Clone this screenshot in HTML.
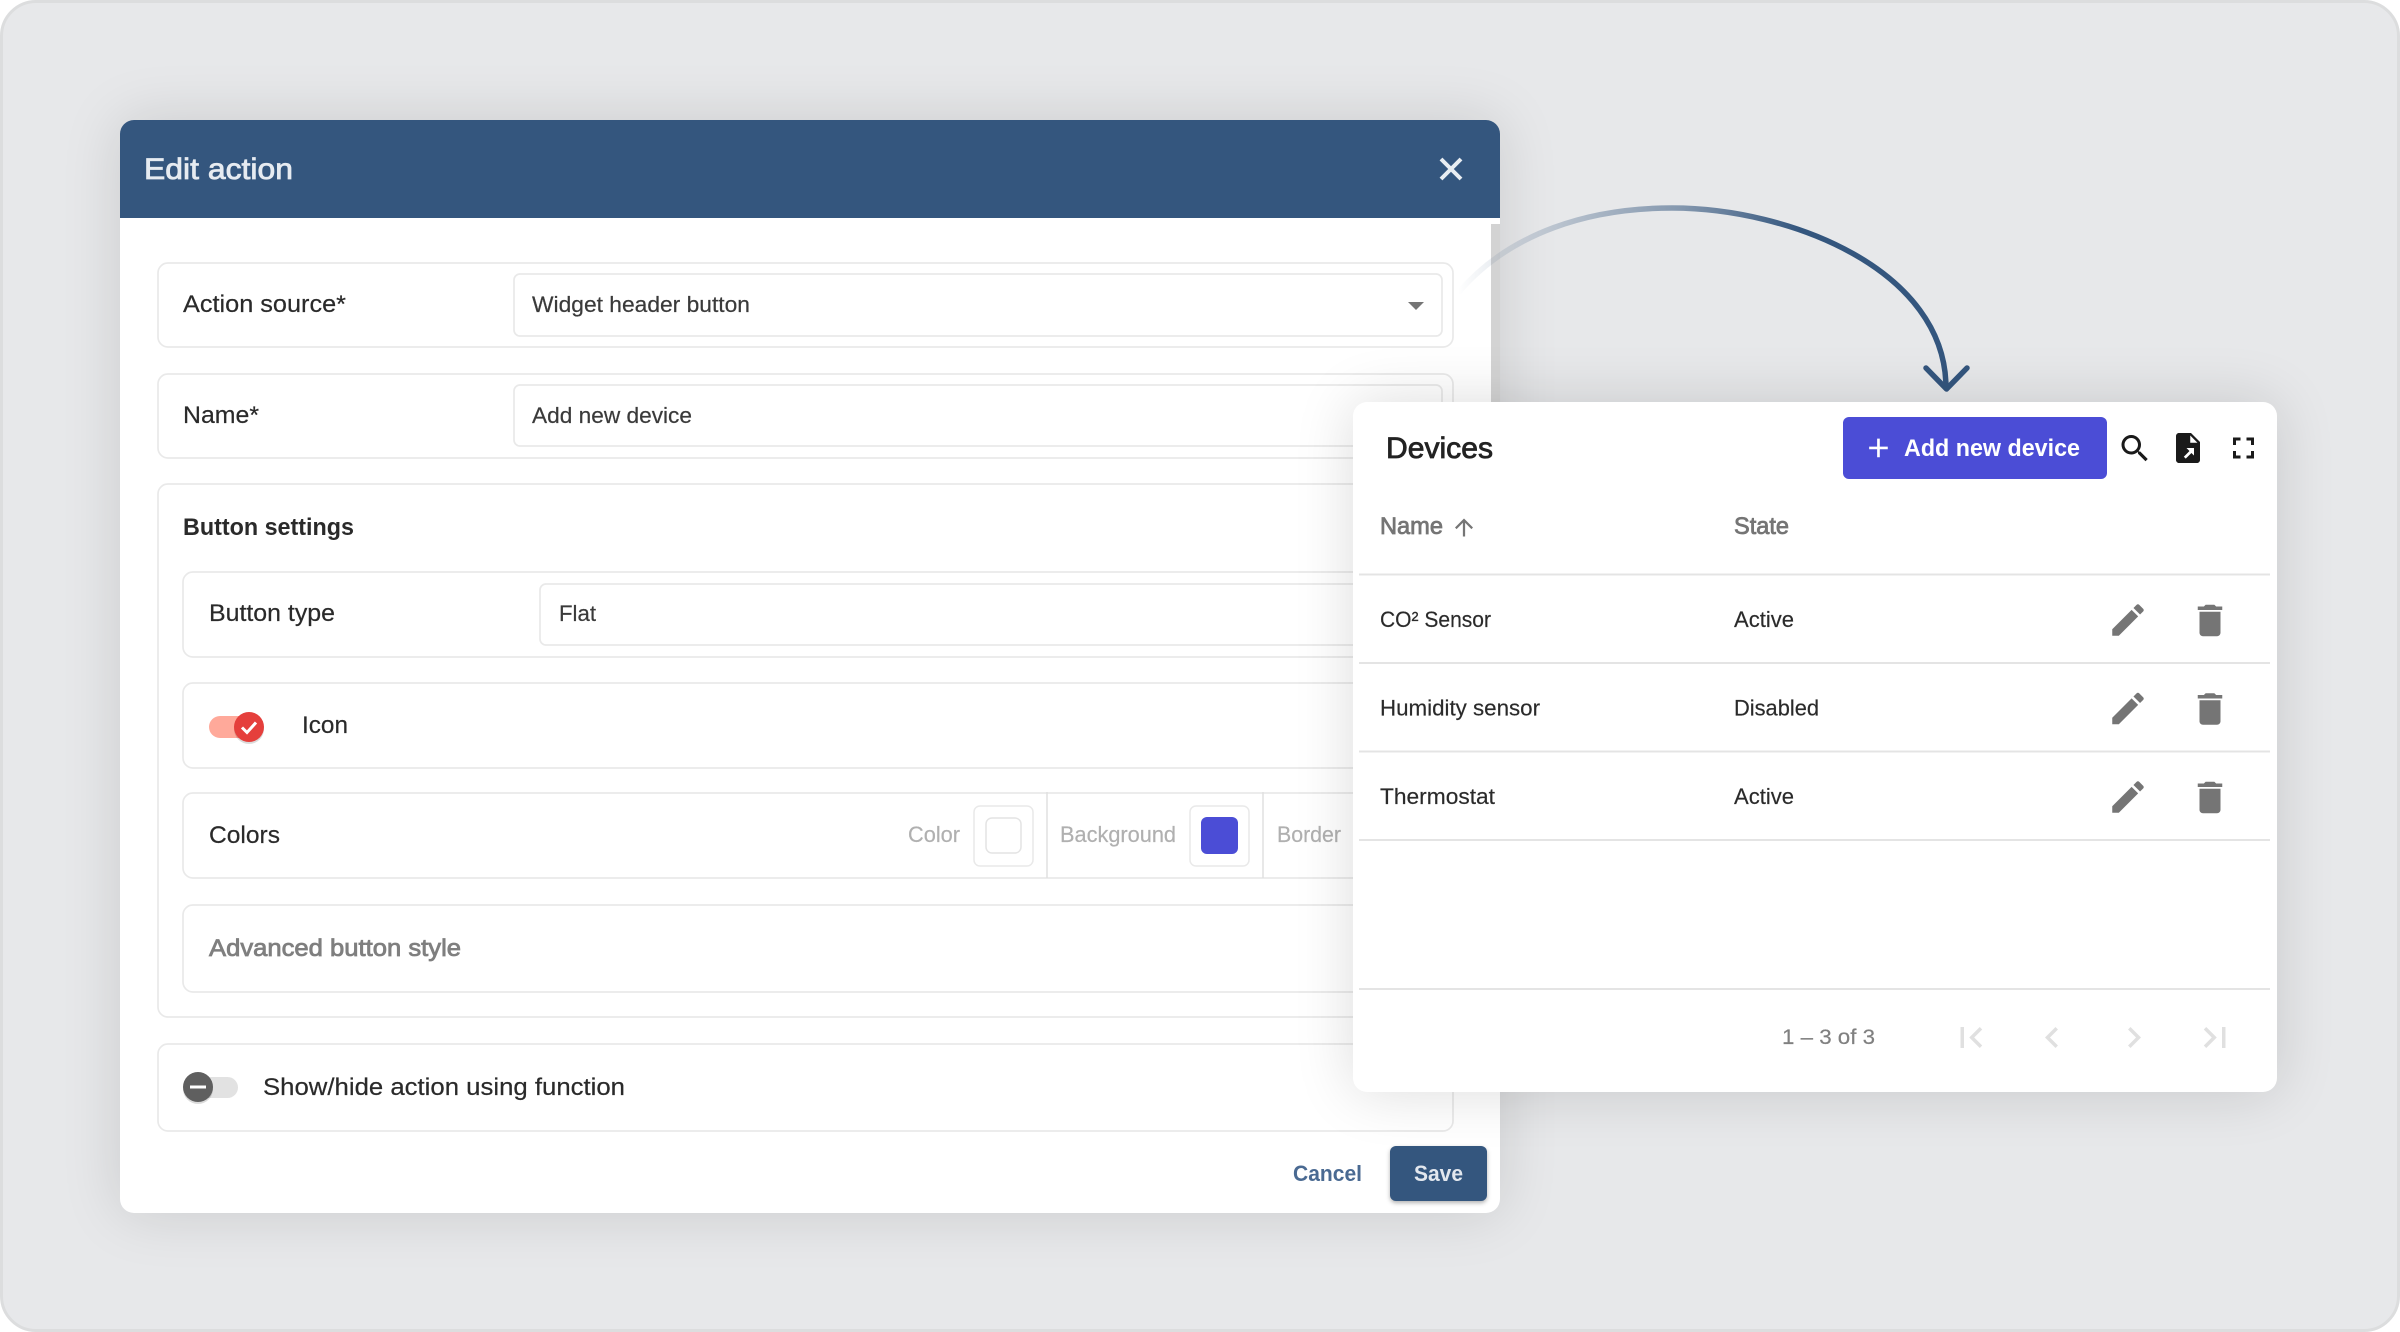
<!DOCTYPE html>
<html lang="en"><head><meta charset="utf-8"><title>Edit action</title>
<style>
html,body{margin:0;padding:0;width:2400px;height:1332px;overflow:hidden;background:#fff}
#frame{position:absolute;left:0;top:0;width:2400px;height:1332px;box-sizing:border-box;border:3px solid #dcddde;border-radius:36px;background:#e7e8ea;overflow:hidden}
#dialog{position:absolute;left:120px;top:120px;width:1380px;height:1093px;background:#fff;border-radius:14px;box-shadow:0 0 60px rgba(0,0,0,.13)}
#card{position:absolute;left:1353px;top:402px;width:924px;height:690px;background:#fff;border-radius:14px;box-shadow:0 0 60px rgba(0,0,0,.14)}
svg.l{position:absolute;left:0;top:0;width:2400px;height:1332px}
svg text{font-family:"Liberation Sans",sans-serif;white-space:pre}
.box{fill:#fff;stroke:#e9e9e9;stroke-width:1.7}
.t{font-size:24.5px;fill:#2a2a2a;stroke:#2a2a2a;stroke-width:.2px}
.f{font-size:22px;fill:#3a3a3a;stroke:#3a3a3a;stroke-width:.2px}
.g{font-size:22px;fill:#b0b0b0;stroke:#b0b0b0;stroke-width:.2px}
.m{stroke-width:.8px}
</style></head><body>
<div id="frame"></div>
<div id="dialog"></div>

<svg class="l" viewBox="0 0 2400 1332">
  <path d="M120 218V134a14 14 0 0 1 14-14H1486a14 14 0 0 1 14 14V218z" fill="#34567e"/>
  <rect x="1491" y="224" width="9" height="180" fill="#d3d3d3"/>
  <text x="144" y="179" font-size="30" fill="#e6ebf1" stroke="#e6ebf1" class="m" textLength="149" lengthAdjust="spacingAndGlyphs">Edit action</text>
  <path d="M1441 159l20 20M1461 159l-20 20" stroke="#e8edf2" stroke-width="4" fill="none"/>

  <rect class="box" x="158" y="263" width="1295" height="84" rx="10"/>
  <rect class="box" x="514" y="274" width="928" height="62" rx="6"/>
  <text class="t" x="183" y="312" textLength="163" lengthAdjust="spacingAndGlyphs">Action source*</text>
  <text class="f" x="532" y="312" textLength="218" lengthAdjust="spacingAndGlyphs">Widget header button</text>
  <path d="M1408 302h16l-8 8z" fill="#757575"/>

  <rect class="box" x="158" y="374" width="1295" height="84" rx="10"/>
  <rect class="box" x="514" y="385" width="928" height="61" rx="6"/>
  <text class="t" x="183" y="423" textLength="76" lengthAdjust="spacingAndGlyphs">Name*</text>
  <text class="f" x="532" y="423" textLength="160" lengthAdjust="spacingAndGlyphs">Add new device</text>

  <rect class="box" x="158" y="484" width="1295" height="533" rx="10"/>
  <text x="183" y="535" font-size="24" font-weight="700" fill="#2a2a2a" textLength="171" lengthAdjust="spacingAndGlyphs">Button settings</text>

  <rect class="box" x="183" y="572" width="1250" height="85" rx="10"/>
  <rect class="box" x="540" y="584" width="880" height="61" rx="6"/>
  <text class="t" x="209" y="621" textLength="126" lengthAdjust="spacingAndGlyphs">Button type</text>
  <text class="f" x="559" y="621" textLength="37" lengthAdjust="spacingAndGlyphs">Flat</text>

  <rect class="box" x="183" y="683" width="1250" height="85" rx="10"/>
  <rect x="209" y="716" width="46" height="22" rx="11" fill="#ffa99a"/>
  <circle cx="249" cy="729" r="15" fill="#000" opacity=".14"/>
  <circle cx="249" cy="727" r="15" fill="#e53f3c"/>
  <path d="M242 727.5l5 5 9-10" stroke="#fff" stroke-width="3" fill="none"/>
  <text class="t" x="302" y="733" textLength="46" lengthAdjust="spacingAndGlyphs">Icon</text>

  <rect class="box" x="183" y="793" width="1250" height="85" rx="10"/>
  <text class="t" x="209" y="843" textLength="71" lengthAdjust="spacingAndGlyphs">Colors</text>
  <text class="g" x="908" y="842" textLength="52" lengthAdjust="spacingAndGlyphs">Color</text>
  <rect x="974" y="806" width="59" height="60" rx="6" fill="#fff" stroke="#e9e9e9" stroke-width="1.5"/>
  <rect x="986" y="818" width="35" height="35" rx="6" fill="#fff" stroke="#e4e4e4" stroke-width="1.5"/>
  <path d="M1047 792v86M1263 792v86" stroke="#e0e0e0" stroke-width="1.5"/>
  <text class="g" x="1060" y="842" textLength="116" lengthAdjust="spacingAndGlyphs">Background</text>
  <rect x="1190" y="806" width="59" height="60" rx="6" fill="#fff" stroke="#e9e9e9" stroke-width="1.5"/>
  <rect x="1201" y="817" width="37" height="37" rx="6" fill="#4b4dd6"/>
  <text class="g" x="1277" y="842" textLength="64" lengthAdjust="spacingAndGlyphs">Border</text>

  <rect class="box" x="183" y="905" width="1250" height="87" rx="10"/>
  <text x="209" y="956" font-size="24.5" fill="#7f7f7f" stroke="#7f7f7f" class="m" textLength="252" lengthAdjust="spacingAndGlyphs">Advanced button style</text>

  <rect class="box" x="158" y="1044" width="1295" height="87" rx="10"/>
  <rect x="190" y="1077" width="48" height="21" rx="10.5" fill="#e2e2e2"/>
  <circle cx="198" cy="1089" r="15" fill="#000" opacity=".14"/>
  <circle cx="198" cy="1087" r="15" fill="#5f5f5f"/>
  <path d="M190 1087h16" stroke="#fff" stroke-width="3"/>
  <text class="t" x="263" y="1095" textLength="362" lengthAdjust="spacingAndGlyphs">Show/hide action using function</text>

  <text x="1293" y="1181" font-size="22" font-weight="700" fill="#4a6a92" textLength="69" lengthAdjust="spacingAndGlyphs">Cancel</text>
  <rect x="1390" y="1146" width="97" height="55" rx="6" fill="#34567e" style="filter:drop-shadow(0 2px 2px rgba(0,0,0,.3))"/>
  <text x="1414" y="1181" font-size="22" font-weight="700" fill="#e2e7ee" textLength="49" lengthAdjust="spacingAndGlyphs">Save</text>
</svg>

<svg class="l" viewBox="0 0 2400 1332">
  <defs><linearGradient id="ar" gradientUnits="userSpaceOnUse" x1="1458" y1="0" x2="1800" y2="0">
    <stop offset="0" stop-color="#34567e" stop-opacity="0"/>
    <stop offset=".1" stop-color="#34567e" stop-opacity=".1"/>
    <stop offset=".65" stop-color="#34567e" stop-opacity=".55"/>
    <stop offset="1" stop-color="#34567e"/>
  </linearGradient></defs>
  <path d="M1458 293C1510 232 1590 208 1672 208C1790 208 1946 270 1946 388" fill="none" stroke="url(#ar)" stroke-width="5.5"/>
  <path d="M1926 368l20.500 21 20.500-21" fill="none" stroke="#34567e" stroke-width="5.5" stroke-linecap="round" stroke-linejoin="round"/>
</svg>

<div id="card"></div>

<svg class="l" viewBox="0 0 2400 1332">
  <text x="1386" y="458" font-size="30" fill="#222" stroke="#222" class="m" textLength="107" lengthAdjust="spacingAndGlyphs">Devices</text>
  <rect x="1843" y="417" width="264" height="62" rx="6" fill="#4b4dd6"/>
  <path transform="translate(1862.500,432) scale(1.33)" fill="#fff" d="M19 13h-6v6h-2v-6H5v-2h6V5h2v6h6v2z"/>
  <text x="1904" y="456" font-size="24" font-weight="700" fill="#fff" textLength="176" lengthAdjust="spacingAndGlyphs">Add new device</text>
  <path transform="translate(2117,430.500) scale(1.5)" fill="#1a1a1a" d="M15.500 14h-.79l-.28-.27A6.471 6.471 0 0 0 16 9.500 6.500 6.500 0 1 0 9.500 16c1.610 0 3.090-.59 4.230-1.570l.27.28v.79l5 4.990L20.490 19l-4.990-5zm-6 0C7.010 14 5 11.990 5 9.500S7.010 5 9.500 5 14 7.010 14 9.500 11.990 14 9.500 14z"/>
  <g transform="translate(2170,430) scale(1.5)">
    <path fill="#1a1a1a" d="M6 2c-1.100 0-2 .9-2 2v16c0 1.100.9 2 2 2h12c1.100 0 2-.9 2-2V8l-6-6H6z"/>
    <path fill="#fff" d="M13.500 3.700L18.300 8.500h-4.800z"/>
    <path fill="#fff" d="M11 12h5v5l-1.700-1.700-3.800 3.800-1.300-1.300 3.800-3.800z"/>
  </g>
  <path transform="translate(2225.500,430) scale(1.5)" fill="#1a1a1a" d="M7 14H5v5h5v-2H7v-3zm-2-4h2V7h3V5H5v5zm12 7h-3v2h5v-5h-2v3zM14 5v2h3v3h2V5h-5z"/>

  <text x="1380" y="534" font-size="24" fill="#757575" stroke="#757575" class="m" textLength="63" lengthAdjust="spacingAndGlyphs">Name</text>
  <path transform="translate(1450.500,514) scale(1.125)" fill="#757575" d="M4 12l1.410 1.410L11 7.830V20h2V7.830l5.580 5.590L20 12l-8-8-8 8z"/>
  <text x="1734" y="534" font-size="24" fill="#757575" stroke="#757575" class="m" textLength="55" lengthAdjust="spacingAndGlyphs">State</text>

  <path d="M1359 574.500H2270M1359 663H2270M1359 751.500H2270M1359 840H2270M1359 989H2270" stroke="#e4e4e4" stroke-width="2"/>

  <text class="f" x="1380" y="627" textLength="111" lengthAdjust="spacingAndGlyphs" style="fill:#2a2a2a">CO² Sensor</text>
  <text class="f" x="1734" y="627" textLength="60" lengthAdjust="spacingAndGlyphs" style="fill:#2a2a2a">Active</text>
  <text class="f" x="1380" y="715.500" textLength="160" lengthAdjust="spacingAndGlyphs" style="fill:#2a2a2a">Humidity sensor</text>
  <text class="f" x="1734" y="715.500" textLength="85" lengthAdjust="spacingAndGlyphs" style="fill:#2a2a2a">Disabled</text>
  <text class="f" x="1380" y="804" textLength="115" lengthAdjust="spacingAndGlyphs" style="fill:#2a2a2a">Thermostat</text>
  <text class="f" x="1734" y="804" textLength="60" lengthAdjust="spacingAndGlyphs" style="fill:#2a2a2a">Active</text>

  <g fill="#757575">
    <path transform="translate(2107,599) scale(1.75)" d="M3 17.250V21h3.750L17.810 9.940l-3.750-3.750L3 17.250zM20.710 7.040c.39-.39.39-1.020 0-1.410l-2.340-2.340c-.39-.39-1.020-.39-1.410 0l-1.830 1.830 3.750 3.750 1.830-1.830z"/>
    <path transform="translate(2189,599.500) scale(1.75)" d="M6 19c0 1.100.9 2 2 2h8c1.100 0 2-.9 2-2V7H6v12zM19 4h-3.500l-1-1h-5l-1 1H5v2h14V4z"/>
    <path transform="translate(2107,687.500) scale(1.75)" d="M3 17.250V21h3.750L17.810 9.940l-3.750-3.750L3 17.250zM20.710 7.040c.39-.39.39-1.020 0-1.410l-2.340-2.340c-.39-.39-1.020-.39-1.410 0l-1.830 1.830 3.750 3.750 1.830-1.830z"/>
    <path transform="translate(2189,688) scale(1.75)" d="M6 19c0 1.100.9 2 2 2h8c1.100 0 2-.9 2-2V7H6v12zM19 4h-3.500l-1-1h-5l-1 1H5v2h14V4z"/>
    <path transform="translate(2107,776) scale(1.75)" d="M3 17.250V21h3.750L17.810 9.940l-3.750-3.750L3 17.250zM20.710 7.040c.39-.39.39-1.020 0-1.410l-2.340-2.340c-.39-.39-1.020-.39-1.410 0l-1.830 1.830 3.750 3.750 1.830-1.830z"/>
    <path transform="translate(2189,776.500) scale(1.75)" d="M6 19c0 1.100.9 2 2 2h8c1.100 0 2-.9 2-2V7H6v12zM19 4h-3.500l-1-1h-5l-1 1H5v2h14V4z"/>
  </g>

  <text x="1782" y="1044" font-size="21" fill="#808080" stroke="#808080" stroke-width=".2" textLength="93" lengthAdjust="spacingAndGlyphs">1 – 3 of 3</text>
  <g fill="#e0e0e0">
    <path transform="translate(1950,1016.500) scale(1.75)" d="M18.410 16.590L13.820 12l4.590-4.590L17 6l-6 6 6 6zM6 6h2v12H6z"/>
    <path transform="translate(2031,1016.500) scale(1.75)" d="M15.410 7.410L14 6l-6 6 6 6 1.410-1.410L10.830 12z"/>
    <path transform="translate(2113,1016.500) scale(1.75)" d="M10 6L8.590 7.410 13.170 12l-4.580 4.590L10 18l6-6z"/>
    <path transform="translate(2194,1016.500) scale(1.75)" d="M5.590 7.410L10.180 12l-4.590 4.590L7 18l6-6-6-6zM16 6h2v12h-2z"/>
  </g>
</svg>
</body></html>
